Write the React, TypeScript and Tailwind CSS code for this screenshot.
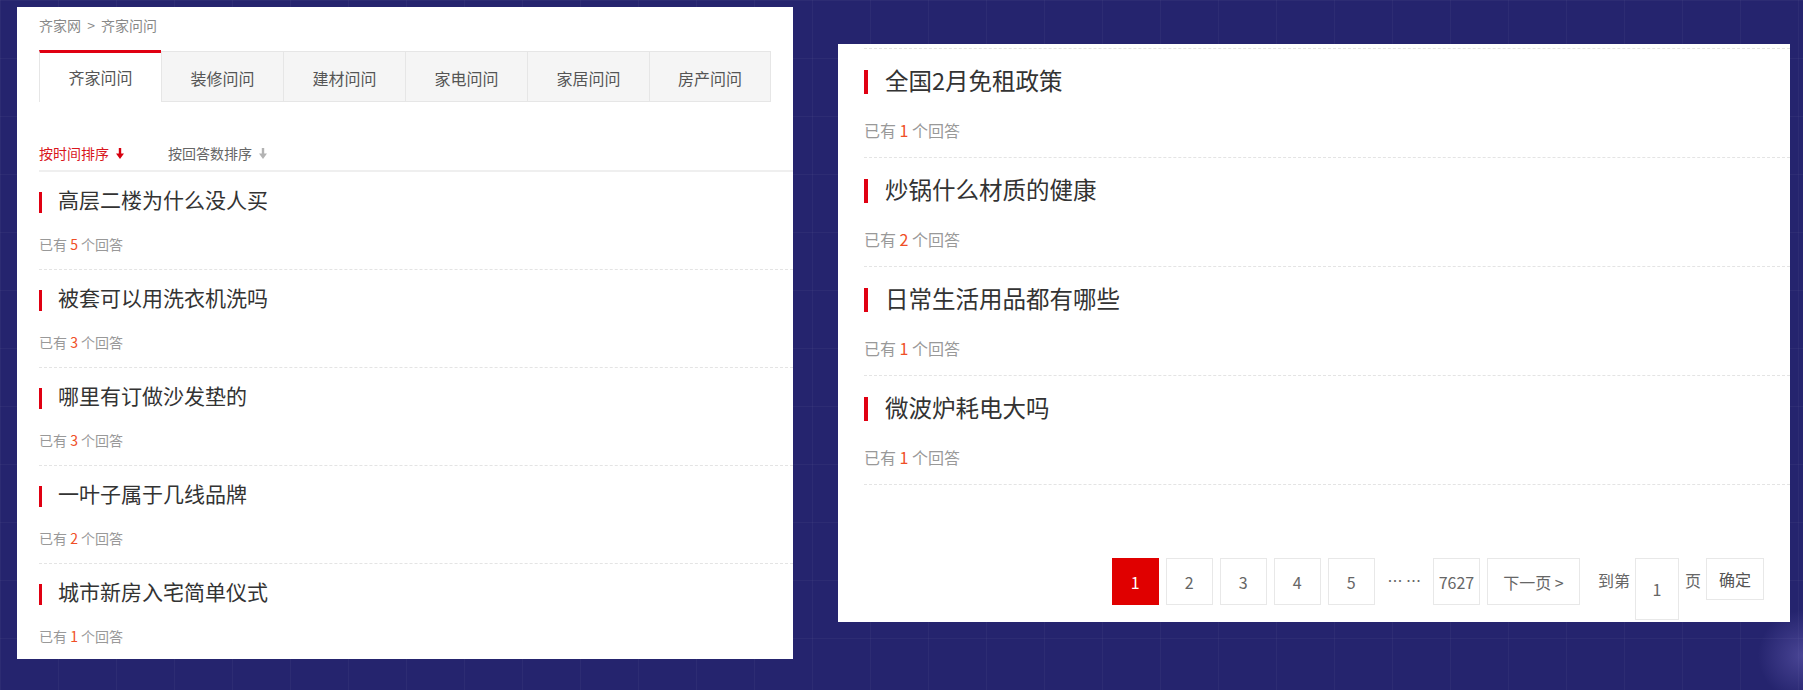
const font = { fontFamily: '"Noto Sans CJK SC", "Noto Sans", sans-serif' };

const leftItems = [
  { title: '高层二楼为什么没人买', count: 5 },
  { title: '被套可以用洗衣机洗吗', count: 3 },
  { title: '哪里有订做沙发垫的', count: 3 },
  { title: '一叶子属于几线品牌', count: 2 },
  { title: '城市新房入宅简单仪式', count: 1 },
];

const rightItems = [
  { title: '全国2月免租政策', count: 1 },
  { title: '炒锅什么材质的健康', count: 2 },
  { title: '日常生活用品都有哪些', count: 1 },
  { title: '微波炉耗电大吗', count: 1 },
];

const tabs = ['齐家问问', '装修问问', '建材问问', '家电问问', '家居问问', '房产问问'];

function SortArrow({ active }: { active?: boolean }) {
  return (
    <svg width="8" height="11" viewBox="0 0 8 11" className="ml-[7px]">
      <path d="M2.8 0h2.4v5.5H8L4 11 0 5.5h2.8z" fill={active ? '#d7000f' : '#b3b3b3'} />
    </svg>
  );
}

function LeftCard() {
  return (
    <div className="mt-[7px] w-[776px] h-[652px] shrink-0 overflow-hidden bg-white pl-[22px] pt-[8px]">
      <div className="h-[20px] text-[14px] leading-[20px] text-[#888]">
        齐家网 <span className="mx-[3px]">&gt;</span> 齐家问问
      </div>

      <div className="mt-[15px] flex h-[52px] items-end">
        {tabs.map((t, i) =>
          i === 0 ? (
            <div
              key={t}
              className="flex h-[52px] w-[122px] items-center justify-center border-l border-t-[3px] border-l-[#e6e6e6] border-t-[#e00012] bg-white pb-[1px] text-[16px] text-[#555]"
            >
              {t}
            </div>
          ) : (
            <div
              key={t}
              className={`flex h-[51px] w-[122px] items-center justify-center border-b border-l border-t border-[#e6e6e6] bg-[#f5f5f5] pt-[3px] text-[16px] text-[#555] ${i === tabs.length - 1 ? 'border-r' : ''}`}
            >
              {t}
            </div>
          ),
        )}
      </div>

      <div className="mt-[41px] flex h-[20px] items-center text-[14px] leading-[20px]">
        <span className="text-[#d9161c]">按时间排序</span>
        <SortArrow active />
        <span className="ml-[44px] text-[#666]">按回答数排序</span>
        <SortArrow />
      </div>
      <div className="mt-[7px] h-[2px] bg-[#efefef]" />

      {leftItems.map((it, i) => (
        <div
          key={it.title}
          className={`pb-[13px] pt-[15px] ${i < leftItems.length - 1 ? 'border-b border-dashed border-[#e4e4e4]' : ''}`}
        >
          <div className="flex h-[30px] items-center">
            <span className="h-[21px] w-[3px] bg-[#e00012]" />
            <span className="ml-[16px] pb-[6px] text-[21px] leading-[30px] text-[#333]">{it.title}</span>
          </div>
          <div className="mt-[17px] h-[22px] text-[14px] leading-[20px] text-[#999]">
            已有 <span className="text-[#ef4f26]">{it.count}</span> 个回答
          </div>
        </div>
      ))}
    </div>
  );
}

function PageBtn({ label, active, wide }: { label: string; active?: boolean; wide?: boolean }) {
  return (
    <div
      className={`flex h-[47px] items-center justify-center border text-[16px] ${wide ? 'w-[93px]' : 'w-[47px]'} ${
        active ? 'border-[#e00000] bg-[#e00000] text-white' : 'border-[#e8e8e8] bg-white text-[#666]'
      }`}
    >
      {label}
    </div>
  );
}

function RightCard() {
  return (
    <div className="mt-[44px] w-[952px] h-[578px] shrink-0 overflow-hidden bg-white pl-[26px]">
      <div className="h-[5px] border-b border-dashed border-[#e4e4e4]" />
      {rightItems.map((it) => (
        <div key={it.title} className="border-b border-dashed border-[#e4e4e4] pb-[14px] pt-[16px]">
          <div className="flex h-[34px] items-center">
            <span className="h-[24px] w-[4px] bg-[#e00012]" />
            <span className="ml-[17px] pb-[5px] text-[23.5px] leading-[34px] text-[#333]">{it.title}</span>
          </div>
          <div className="mt-[20px] h-[24px] text-[16px] leading-[22px] text-[#999]">
            已有 <span className="text-[#ef4f26]">{it.count}</span> 个回答
          </div>
        </div>
      ))}

      <div className="mt-[73px] flex items-start justify-end pr-[26px]">
        <PageBtn label="1" active />
        <div className="ml-[7px]"><PageBtn label="2" /></div>
        <div className="ml-[7px]"><PageBtn label="3" /></div>
        <div className="ml-[7px]"><PageBtn label="4" /></div>
        <div className="ml-[7px]"><PageBtn label="5" /></div>
        <div className="ml-[13px] flex h-[47px] items-center text-[15px] text-[#666]">… …</div>
        <div className="ml-[12px]"><PageBtn label="7627" /></div>
        <div className="ml-[7px]"><PageBtn label="下一页 >" wide /></div>
        <div className="ml-[18px] flex h-[44px] items-center text-[16px] text-[#666]">到第</div>
        <div className="ml-[5px] flex h-[62px] w-[44px] items-center justify-center border border-[#e8e8e8] text-[16px] text-[#666]">
          1
        </div>
        <div className="ml-[6px] flex h-[44px] items-center text-[16px] text-[#666]">页</div>
        <div className="ml-[5px] flex h-[42px] w-[58px] items-center justify-center border border-[#e8e8e8] text-[16px] text-[#555]">
          确定
        </div>
      </div>
    </div>
  );
}

export default function App() {
  return (
    <div
      style={font}
      className="flex h-[690px] w-[1803px] items-start gap-[45px] overflow-hidden bg-[#25246e] bg-[image:radial-gradient(circle_at_100%_95%,rgba(140,130,220,0.35),transparent_45px),linear-gradient(rgba(255,255,255,0.035)_1px,transparent_1px),linear-gradient(90deg,rgba(255,255,255,0.035)_1px,transparent_1px)] bg-[size:100%_100%,58px_58px,58px_58px] pl-[17px]"
    >
      <LeftCard />
      <RightCard />
    </div>
  );
}
